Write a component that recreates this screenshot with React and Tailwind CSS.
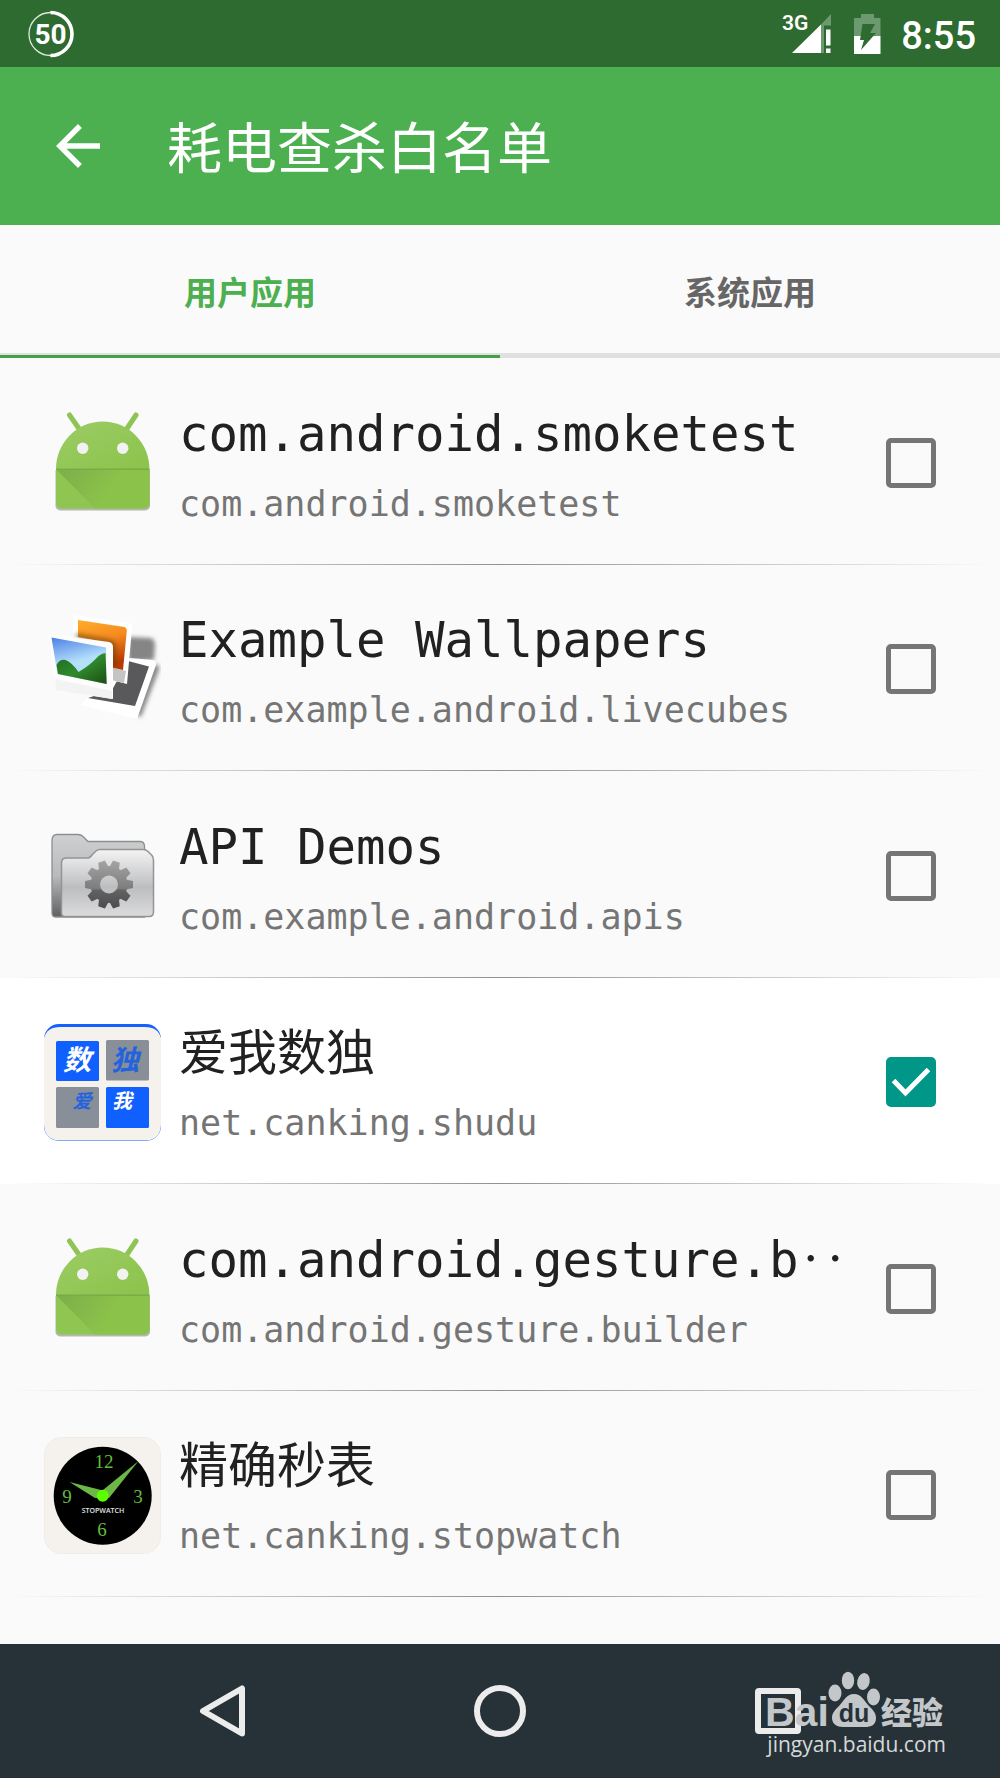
import React, { useState } from "react";

const CJK = 'font-["Noto_Sans_CJK_SC",sans-serif]';

function AndroidIcon() {
  return (
    <svg viewBox="0 0 117 117" className="block size-full" aria-hidden="true">
      <defs>
        <linearGradient id="droidHead" x1="0" y1="0" x2="1" y2="1">
          <stop offset="0" stopColor="#9ccc65" />
          <stop offset="1" stopColor="#8bc34a" />
        </linearGradient>
        <linearGradient id="droidFold" x1="0" y1="0" x2="1" y2="0.3">
          <stop offset="0" stopColor="#7dad4a" />
          <stop offset="0.7" stopColor="#8bc34a" />
        </linearGradient>
      </defs>
      <path d="M11.500 66h94.500v34.500a5 5 0 0 1-5 6h-84.500a5 5 0 0 1-5-6z" fill="#b4b8b0" />
      <g stroke="#8fc455" strokeWidth="5" strokeLinecap="round">
        <path d="M25.500 11L38 29" />
        <path d="M92 11L80 29" />
      </g>
      <path d="M12 65a46.700 47.500 0 0 1 93.400 0z" fill="url(#droidHead)" />
      <path d="M12 65h93.400v34a5 5 0 0 1-5 5.500H17a5 5 0 0 1-5-5.500z" fill="#8fc652" />
      <path d="M12 65h93.400v34a5 5 0 0 1-5 5.500H51z" fill="url(#droidFold)" />
      <path d="M12 64.500h93.400v1.500H12z" fill="#7aab49" />
      <circle cx="38.700" cy="44.200" r="5.700" fill="#f2f2f2" />
      <circle cx="78.700" cy="44.200" r="5.700" fill="#f2f2f2" />
    </svg>
  );
}

function WallpapersIcon() {
  return (
    <svg viewBox="0 0 117 117" className="block size-full" aria-hidden="true">
      <defs>
        <linearGradient id="wpSky" x1="0" y1="0" x2="0.3" y2="1">
          <stop offset="0" stopColor="#4a7fe6" />
          <stop offset="0.6" stopColor="#b5e0fb" />
        </linearGradient>
        <linearGradient id="wpOrange" x1="0" y1="0" x2="0.3" y2="1">
          <stop offset="0" stopColor="#ffae2b" />
          <stop offset="0.5" stopColor="#f58a1f" />
          <stop offset="1" stopColor="#b83a00" />
        </linearGradient>
        <linearGradient id="wpHill" x1="0" y1="0" x2="1" y2="1">
          <stop offset="0" stopColor="#1f6b1f" />
          <stop offset="0.5" stopColor="#2f8a2c" />
          <stop offset="1" stopColor="#1d4d12" />
        </linearGradient>
        <filter id="wpBlur" x="-20%" y="-20%" width="140%" height="140%">
          <feGaussianBlur stdDeviation="2" />
        </filter>
      </defs>
      <path d="M84 26l22 1q5 1 5 7l-1 15-26 2z" fill="#858585" filter="url(#wpBlur)" />
      <path d="M88 50l26 4q2 2 1 5L97 106l-8-3z" fill="#8a8a8a" filter="url(#wpBlur)" />
      <path d="M86 47l23 2q4 1 3 5L93 108 37 94l8-10z" fill="#fff" />
      <path d="M84 50l21 5.500L91 95 44 87l24-8z" fill="#59595b" />
      <path d="M29 4l56 8q4 1 3 5l-5 56-20-5V35l-34-9z" fill="#fff" />
      <path d="M66 56l16 4-2 12-13-3z" fill="#c4c4c4" />
      <path d="M34 9l46.500 7q2.500 1 2.300 3.500L79 59l-13-3-1-24-31-6z" fill="url(#wpOrange)" />
      <path d="M32 22l33 6q7 2 7 9v19l-6-1V33l-34-6z" fill="#5c3a10" opacity=".55" filter="url(#wpBlur)" />
      <path d="M5 23l60 8q4 1 4 5v52L12 79z" fill="#fdfdfd" />
      <path d="M11 68l57 12v8l-56-9z" fill="#f3f3f3" />
      <path d="M7.500 26.500L62 36.500 62.700 73 13.500 63z" fill="url(#wpSky)" />
      <path d="M12.500 54q3-6 9-5 6 2 13 12 12-7 20-16 4-3 7-3L62.700 73 14 63z" fill="url(#wpHill)" />
    </svg>
  );
}

const GEAR_TEETH = [0, 36, 72, 108, 144, 180, 216, 252, 288, 324];

function FolderIcon() {
  return (
    <svg viewBox="0 0 117 117" className="block size-full" aria-hidden="true">
      <defs>
        <linearGradient id="fdBack" x1="0" y1="0" x2="0" y2="1">
          <stop offset="0" stopColor="#cfd0d2" />
          <stop offset="0.5" stopColor="#b9babc" />
          <stop offset="1" stopColor="#5f6062" />
        </linearGradient>
        <linearGradient id="fdFront" x1="0" y1="0" x2="0" y2="1">
          <stop offset="0" stopColor="#f4f4f4" />
          <stop offset="0.5" stopColor="#c3c4c6" />
          <stop offset="0.56" stopColor="#bcbdbf" />
          <stop offset="1" stopColor="#dcdcde" />
        </linearGradient>
        <linearGradient id="fdGear" gradientUnits="userSpaceOnUse" x1="0" y1="43" x2="0" y2="92">
          <stop offset="0" stopColor="#a5a5a5" />
          <stop offset="0.58" stopColor="#7d7d7d" />
          <stop offset="0.62" stopColor="#626262" />
          <stop offset="1" stopColor="#4a4a4a" />
        </linearGradient>
        <mask id="fdGearMask">
          <g fill="#fff">
            <circle cx="65" cy="67.500" r="18.500" />
            {GEAR_TEETH.map((a) => (
              <path key={a} d="M60 51l1.500-7.500h7l1.500 7.500z" transform={`rotate(${a + 90} 65 67.500)`} />
            ))}
          </g>
          <circle cx="65" cy="67.500" r="9" fill="#000" />
        </mask>
      </defs>
      <path
        d="M8 24q0-6.500 5-6.500h21q3 0 5 2l5 5h52q4 0 4.500 4.500v71H12q-4 0-4-4z"
        fill="url(#fdBack)"
        stroke="#8d8e90"
        strokeWidth="1.300"
      />
      <path
        d="M17.500 46q0-5 5-5H43q3 0 5-3l4-4q2-1.500 4-1.500h43q3 0 5 2l4 4q1.500 2 1.500 5V95q0 4.500-4.500 4.500H21q-3.500 0-3.500-4z"
        fill="url(#fdFront)"
        stroke="#939496"
        strokeWidth="1.500"
      />
      <path d="M40 43h50v50H40z" fill="url(#fdGear)" mask="url(#fdGearMask)" />
    </svg>
  );
}

function SudokuIcon() {
  return (
    <svg viewBox="0 0 117 117" className="block size-full" aria-hidden="true">
      <rect width="117" height="117" rx="15" fill="#1561ff" />
      <path
        d="M0 14Q3 3 16 3h85q13 0 16 11v87q-1 15-15 15.500H15Q1 116 0 101z"
        fill="#f5f2ed"
      />
      <rect x="12" y="17" width="43" height="40" rx="1.500" fill="#1060ff" />
      <rect x="62" y="16" width="43" height="40.500" rx="1.500" fill="#888f98" />
      <rect x="12" y="63" width="43" height="41" rx="1.500" fill="#888f98" />
      <rect x="62" y="63" width="43" height="41" rx="1.500" fill="#1060ff" />
      <g
        className='font-["Noto_Sans_CJK_SC",sans-serif] italic'
        fontWeight="700"
        textAnchor="middle"
      >
        <text x="33" y="46" fontSize="28" fill="#fff">数</text>
        <text x="81" y="46" fontSize="28" fill="#2463dc">独</text>
        <text x="38" y="84" fontSize="19" fill="#2463dc">爱</text>
        <text x="78" y="84" fontSize="20" fill="#fff">我</text>
      </g>
    </svg>
  );
}

function StopwatchIcon() {
  return (
    <svg viewBox="0 0 117 117" className="block size-full" aria-hidden="true">
      <rect x="0.500" y="0.500" width="116" height="116" rx="17" fill="#f5f2ed" stroke="#f0ede9" />
      <circle cx="58.700" cy="58.700" r="49" fill="#000" />
      <g className='font-["Liberation_Serif",serif]' fontSize="19" fill="#62bd3c" textAnchor="middle">
        <text x="60" y="31">12</text>
        <text x="94" y="66">3</text>
        <text x="58" y="99">6</text>
        <text x="23" y="66">9</text>
      </g>
      <text
        x="59"
        y="76"
        fontSize="7"
        fontWeight="600"
        fill="#e6e6e6"
        textAnchor="middle"
        className='font-["Open_Sans",sans-serif]'
      >
        STOPWATCH
      </text>
      <path d="M25.500 45L57 53l3 8-9 0z" fill="#6cb847" />
      <path d="M94.500 24L65 61l-8-3 2-5z" fill="#6cb847" />
      <circle cx="58.700" cy="58.700" r="6" fill="#5cff00" />
    </svg>
  );
}

const APPS = [
  { title: "com.android.smoketest", pkg: "com.android.smoketest", Icon: AndroidIcon },
  { title: "Example Wallpapers", pkg: "com.example.android.livecubes", Icon: WallpapersIcon },
  { title: "API Demos", pkg: "com.example.android.apis", Icon: FolderIcon },
  { title: "爱我数独", pkg: "net.canking.shudu", Icon: SudokuIcon, checked: true },
  { title: "com.android.gesture.b‥", pkg: "com.android.gesture.builder", Icon: AndroidIcon },
  { title: "精确秒表", pkg: "net.canking.stopwatch", Icon: StopwatchIcon },
];

function StatusBar() {
  return (
    <div className="flex h-[67px] items-center bg-[#2e6b30] pr-6 pl-7 text-white">
      <svg viewBox="0 0 46 48" className="h-12 w-[46px]" role="img" aria-label="50">
        <circle cx="22.500" cy="24" r="21.500" fill="none" stroke="#dfe9df" strokeWidth="1.300" />
        <path d="M22.500 2.500a21.500 21.500 0 0 1 0 43" fill="none" stroke="#fff" strokeWidth="3.600" />
        <text
          x="22.500"
          y="34"
          fontSize="28"
          fontWeight="700"
          fill="#fff"
          textAnchor="middle"
          className="font-[Roboto,sans-serif]"
        >
          50
        </text>
      </svg>
      <div className="ml-auto flex items-center">
        <svg viewBox="0 0 52 44" className="h-11 w-[52px]" role="img" aria-label="3G">
          <text
            x="0"
            y="18"
            fontSize="21"
            fontWeight="600"
            fill="#fff"
            className="font-[Roboto,sans-serif]"
          >
            3G
          </text>
          <path d="M39 12.500L49 2v11.500h-7V41h-3z" fill="#6d9970" />
          <path d="M10 41L39 12.500V41z" fill="#fff" />
          <path d="M44 17.500h4.500v16H44zM44 36.500h4.500V41H44z" fill="#fff" />
        </svg>
        <svg viewBox="0 0 27 40" className="ml-5 h-10 w-[27px]" role="img" aria-label="充电中">
          <path d="M7 0h13v4h6.500v18H0V4h7z" fill="#6d9970" />
          <path d="M0 22h26.500v18H0z" fill="#fff" />
          <path d="M8.500 10h12.500l-5 9h6L7 36l3-10H6z" fill="#2e6b30" />
        </svg>
        <span className="ml-5 pt-1 font-[Roboto,sans-serif] text-[38px] leading-[46px] font-medium">8:55</span>
      </div>
    </div>
  );
}

function AppRow({ app }) {
  const [checked, setChecked] = useState(Boolean(app.checked));
  const { Icon } = app;
  return (
    <li className={`flex flex-1 flex-col ${checked ? "bg-white" : ""}`}>
      <label className="flex flex-1 cursor-pointer items-center pt-9 pr-16 pb-8 pl-11">
        <span className="size-[117px] shrink-0">
          <Icon />
        </span>
        <span className='ml-[18px] flex min-w-0 flex-1 flex-col gap-4 font-["DejaVu_Sans_Mono","Noto_Sans_CJK_SC",monospace] whitespace-nowrap'>
          <span className="text-[49px] leading-[66px] text-[#212121]">{app.title}</span>
          <span className="text-[35px] leading-10 text-[#757575]">{app.pkg}</span>
        </span>
        <span className="relative size-[50px] shrink-0">
          <input
            type="checkbox"
            checked={checked}
            onChange={(e) => setChecked(e.target.checked)}
            className="block size-full appearance-none rounded-[5px] border-[5px] border-[#757575] checked:border-[#009688] checked:bg-[#009688]"
          />
          {checked && (
            <svg viewBox="0 0 50 50" className="pointer-events-none absolute inset-0" aria-hidden="true">
              <path d="M7.500 23.500L19.500 36 42.500 12.500" fill="none" stroke="#fff" strokeWidth="5" />
            </svg>
          )}
        </span>
      </label>
      <div className="mx-2 h-px bg-linear-to-r from-transparent via-[#8f928f] to-transparent" />
    </li>
  );
}

function NavBar() {
  return (
    <nav className="relative flex h-[134px] items-center bg-[#263238] px-[83px]">
      <button type="button" aria-label="返回" className="flex flex-1 justify-center">
        <svg viewBox="0 0 52 52" className="size-[52px]">
          <path
            d="M46 3.500v45L7 26z"
            fill="none"
            stroke="#ececec"
            strokeWidth="6"
            strokeLinejoin="round"
          />
        </svg>
      </button>
      <button type="button" aria-label="主屏幕" className="flex flex-1 justify-center">
        <svg viewBox="0 0 52 52" className="size-[52px]">
          <circle cx="26" cy="26" r="23" fill="none" stroke="#ececec" strokeWidth="6" />
        </svg>
      </button>
      <button type="button" aria-label="最近任务" className="flex flex-1 justify-center">
        <svg viewBox="0 0 52 52" className="size-[52px]">
          <rect x="6" y="6" width="40" height="40" rx="1" fill="none" stroke="#ececec" strokeWidth="6" strokeLinejoin="round" />
        </svg>
      </button>
      <a href="https://jingyan.baidu.com" className="absolute right-[54px] bottom-5 flex flex-col items-end text-[#d5d8da]">
        <svg viewBox="0 0 180 66" className="h-[66px] w-[180px] overflow-visible" role="img" aria-label="Baidu经验">
          <g fill="#c3c7ca">
            <text x="-1" y="62" fontSize="41" fontWeight="700" className='font-["Liberation_Sans",sans-serif]'>
              Bai
            </text>
            <ellipse cx="69" cy="29" rx="6.500" ry="8.500" />
            <ellipse cx="82" cy="16.500" rx="6.200" ry="8.800" />
            <ellipse cx="97.500" cy="17.500" rx="6.200" ry="8.500" transform="rotate(12 97.500 17.500)" />
            <ellipse cx="107.500" cy="33" rx="6.500" ry="8.500" />
            <path d="M88 30c8 0 10 7 15 12 4 4 7 7 7 12 0 7-5 9-11 9H77c-6 0-11-3-11-9 0-5 3-8 7-12 5-5 7-12 15-12z" />
            <text x="115" y="60" fontSize="31" fontWeight="900" className='font-["Noto_Sans_CJK_SC",sans-serif]'>
              经验
            </text>
          </g>
          <text
            x="88"
            y="58"
            fontSize="25"
            fontWeight="700"
            fill="#263238"
            textAnchor="middle"
            className='font-["Liberation_Sans",sans-serif]'
          >
            du
          </text>
        </svg>
        <span className='font-["Open_Sans",sans-serif] text-[21px] leading-7'>jingyan.baidu.com</span>
      </a>
    </nav>
  );
}

export default function App() {
  const [tab, setTab] = useState(0);
  return (
    <div lang="zh-CN" className="flex min-h-screen flex-col bg-[#fafafa]">
      <StatusBar />
      <header className="flex h-[158px] items-center bg-[#4caf50] pl-[45px] text-white">
        <button type="button" aria-label="返回" className="shrink-0">
          <svg viewBox="0 0 24 24" className="size-[66px]" fill="currentColor">
            <path d="M20 11H7.830l5.590-5.590L12 4l-8 8 8 8 1.410-1.410L7.830 13H20z" />
          </svg>
        </button>
        <h1 className={`ml-14 pb-1 text-[55px] leading-[80px] ${CJK}`}>耗电查杀白名单</h1>
      </header>
      <div role="tablist" className="grid h-[133px] grid-cols-2">
        {["用户应用", "系统应用"].map((name, i) => (
          <button
            key={name}
            type="button"
            role="tab"
            aria-selected={tab === i}
            onClick={() => setTab(i)}
            className={`flex flex-col font-["Noto_Sans_CJK_SC",sans-serif] text-[33px] leading-[48px] font-bold ${
              tab === i ? "text-[#4caf50]" : "text-[#666666]"
            }`}
          >
            <span className="flex w-full flex-1 items-center justify-center pt-1">{name}</span>
            <span className="flex h-[5px] w-full flex-col justify-end bg-[#e0e0e0]">
              <span className={`h-[3px] w-full ${tab === i ? "bg-[#43a047]" : ""}`} />
            </span>
          </button>
        ))}
      </div>
      <ul className="flex flex-1 flex-col pb-[47px]">
        {APPS.map((app) => (
          <AppRow key={app.pkg} app={app} />
        ))}
      </ul>
      <NavBar />
    </div>
  );
}
